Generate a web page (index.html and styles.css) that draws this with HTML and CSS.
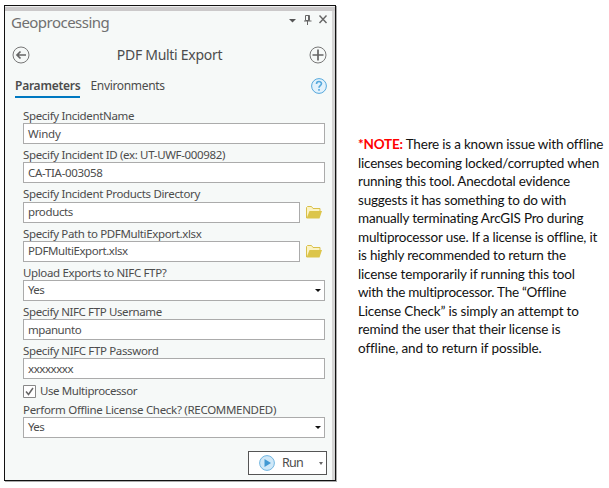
FILE: index.html
```html
<!DOCTYPE html>
<html lang="en">
<head>
<meta charset="utf-8">
<title>Geoprocessing</title>
<link rel="stylesheet" href="styles.css">
</head>
<body>
<main class="page">
  <section class="panel">
    <header class="titlebar">
      <h1>Geoprocessing</h1>
      <svg class="window-icons" width="40" height="12" viewBox="0 0 40 12">
        <path d="M1 5h7L4.500 8.500z" fill="#555"/>
        <path d="M17.500 1.500h4v5h-4zM16 7h7.500M19.500 7v4M20.500 2v4" fill="none" stroke="#666"/>
        <path d="M31.500 1.500l7 7.500M38.500 1.500l-7 7.500" fill="none" stroke="#666" stroke-width="1.400"/>
      </svg>
    </header>
    <div class="tool">
      <svg width="18" height="18" viewBox="0 0 18 18" fill="none" stroke="#777">
        <circle cx="9" cy="9" r="8"/>
        <path d="M5 9H14M8.500 5.500L5 9l3.500 3.500" stroke="#666" stroke-width="1.700"/>
      </svg>
      <h2>PDF Multi Export</h2>
      <svg width="18" height="18" viewBox="0 0 18 18" fill="none" stroke="#777">
        <circle cx="9" cy="9" r="8"/>
        <path d="M3.500 9h11M9 3.500v11" stroke="#666" stroke-width="1.700"/>
      </svg>
    </div>
    <nav class="tabs">
      <span class="tab active">Parameters</span>
      <span class="tab env">Environments</span>
      <svg class="help" width="16" height="16" viewBox="0 0 16 16" fill="none" stroke="#55a8dc">
        <circle cx="8" cy="8" r="7.400" fill="#e3f2fc"/>
        <path d="M5.500 6c0-3.300 5-3.200 5-.4C10.500 7.600 8 7.700 8 9.800M8 11v1.700" stroke-width="1.600"/>
      </svg>
    </nav>
    <form class="fields">
      <div class="field"><label><span class="l1">Specify IncidentName</span></label><div class="input"><span class="v1">Windy</span></div></div>
      <div class="field"><label><span class="l2">Specify Incident ID (ex: UT-UWF-000982)</span></label><div class="input"><span class="v2">CA-TIA-003058</span></div></div>
      <div class="field"><label><span class="l3">Specify Incident Products Directory</span></label>
        <div class="row"><div class="input"><span class="v3">products</span></div>
          <svg width="16" height="13" viewBox="0 0 16 13"><path d="M.5 12V1.500L1.500.5h4l1.500 2h7V5" fill="#fbf3c4" stroke="#d9c04a"/><path d="M.5 12.500L3.500 5H16l-2.500 7.500z" fill="#dcc54a"/></svg></div></div>
      <div class="field"><label><span class="l4">Specify Path to PDFMultiExport.xlsx</span></label>
        <div class="row"><div class="input"><span class="v4">PDFMultiExport.xlsx</span></div>
          <svg width="16" height="13" viewBox="0 0 16 13"><path d="M.5 12V1.500L1.500.5h4l1.500 2h7V5" fill="#fbf3c4" stroke="#d9c04a"/><path d="M.5 12.500L3.500 5H16l-2.500 7.500z" fill="#dcc54a"/></svg></div></div>
      <div class="field"><label><span class="l5">Upload Exports to NIFC FTP?</span></label><div class="input select"><span class="v5">Yes</span><i class="caret"></i></div></div>
      <div class="field"><label><span class="l6">Specify NIFC FTP Username</span></label><div class="input"><span class="v6">mpanunto</span></div></div>
      <div class="field"><label><span class="l7">Specify NIFC FTP Password</span></label><div class="input"><span class="v7">xxxxxxxx</span></div></div>
      <div class="check">
        <svg width="13" height="13" viewBox="0 0 13 13"><path d="M.5.5h12v12H.5z" fill="#fff" stroke="#888"/><path d="M3 6.500l2.500 3L10 3" fill="none" stroke="#666" stroke-width="1.500"/></svg>
        <span class="l8">Use Multiprocessor</span>
      </div>
      <div class="field"><label><span class="l9">Perform Offline License Check? (RECOMMENDED)</span></label><div class="input select"><span class="v5">Yes</span><i class="caret"></i></div></div>
    </form>
    <div class="run">
      <svg width="16" height="16" viewBox="0 0 16 16"><circle cx="8" cy="8" r="7.400" fill="#cfe8f8" stroke="#72b6e0"/><path d="M5.500 4v8L12 8z" fill="#4299d3"/></svg>
      <span class="run-label">Run</span>
      <i class="caret"></i>
    </div>
  </section>
  <p class="note">
    <span class="n1"><b>*NOTE:</b> There is a known issue with offline</span><br>
    <span class="n2">licenses becoming locked/corrupted when</span><br>
    <span class="n3">running this tool. Anecdotal evidence</span><br>
    <span class="n4">suggests it has something to do with</span><br>
    <span class="n5">manually terminating ArcGIS Pro during</span><br>
    <span class="n6">multiprocessor use. If a license is offline, it</span><br>
    <span class="n7">is highly recommended to return the</span><br>
    <span class="n8">license temporarily if running this tool</span><br>
    <span class="n9">with the multiprocessor. The “Offline</span><br>
    <span class="n10">License Check” is simply an attempt to</span><br>
    <span class="n11">remind the user that their license is</span><br>
    <span class="n12">offline, and to return if possible.</span>
  </p>
</main>
</body>
</html>
```
FILE: styles.css
```css
* { box-sizing: border-box; }
body { margin: 0; background: #fff; }
svg { display: block; flex: none; }
.page { display: flex; align-items: flex-start; width: 609px; height: 488px; padding: 5px 0 0 4px; overflow: hidden; }
.panel {
  display: flex; flex-direction: column; flex: none;
  width: 332px; height: 476px;
  border: 1px solid #111; background: #f6f9f8;
  box-shadow: inset 0 1px #eee, inset 0 5px #cbc9ca, inset -3px 0 #d5d5d5, 1px 1px #aaa;
  color: #4c4c4c; font: 11.500px/16px "Noto Sans", sans-serif;
}
.titlebar { display: flex; justify-content: space-between; height: 35px; padding: 7px 7px 0 6px; }
h1 { margin: 0; font-size: 15px; line-height: 18px; font-weight: 400; color: #707070; letter-spacing: -.53px; }
.window-icons { margin-top: 1px; }
.tool { display: flex; align-items: center; justify-content: space-between; height: 28px; padding: 0 8px 0 7px; }
h2 { margin: 0; font-size: 14px; line-height: 18px; font-weight: 400; letter-spacing: -.28px; }
.tabs { display: flex; height: 36px; padding: 4px 8px 0 10px; font-size: 12px; line-height: 18px; }
.tab { height: 25px; padding-top: 4px; margin-right: 10px; white-space: nowrap; }
.active { font-weight: 600; border-bottom: 2px solid #0079c1; letter-spacing: -.25px; }
.env { letter-spacing: -.33px; }
.help { margin: 5px 0 0 auto; }
.fields { margin: 0 11px 0 18px; }
.field { height: 39.2px; }
.field label { display: block; height: 18.2px; padding-top: 3px; white-space: nowrap; }
.input { display: flex; align-items: center; flex: none; width: 302px; height: 21px; padding: 0 4px; border: 1px solid #ababab; background: #fff; }
.row { display: flex; align-items: center; gap: 6px; }
.row .input { width: 277px; }
.select { justify-content: space-between; padding-right: 3px; }
.caret { width: 0; height: 0; border: 3px solid transparent; border-top: 3px solid #111; border-bottom: 0; }
.check { display: flex; align-items: center; gap: 4px; height: 19.4px; padding-top: 4px; }
.run { display: flex; align-items: center; width: 79px; height: 24px; margin: 13.600px 8px 0 auto; padding: 0 3px 0 10px; border: 1px solid #555; background: #fff; }
.run-label { margin-left: 7px; font-size: 12.500px; letter-spacing: -.8px; }
.run .caret { margin-left: auto; border-width: 2.500px; border-bottom: 0; border-top: 3px solid #666; }

.l1, .l2, .l3 { letter-spacing: -.34px; }
.l4, .l5, .l7 { letter-spacing: -.36px; }
.l6 { letter-spacing: -.38px; }
.l8 { letter-spacing: -.4px; }
.l9 { letter-spacing: -.3px; }
.v1 { letter-spacing: -.24px; }
.v2 { letter-spacing: -.31px; }
.v3 { letter-spacing: -.37px; }
.v4, .v6, .v7 { letter-spacing: -.44px; }
.v5 { letter-spacing: -.6px; }

.note { margin: 130px 0 0 22px; color: #111; font: 13.500px/18.500px Lato, sans-serif; letter-spacing: -.2px; white-space: nowrap; }
.note b { color: #f00; }
.n8, .n10 { letter-spacing: -.16px; }
.n9 { letter-spacing: -.27px; }
.n11, .n12 { letter-spacing: -.13px; }
```
